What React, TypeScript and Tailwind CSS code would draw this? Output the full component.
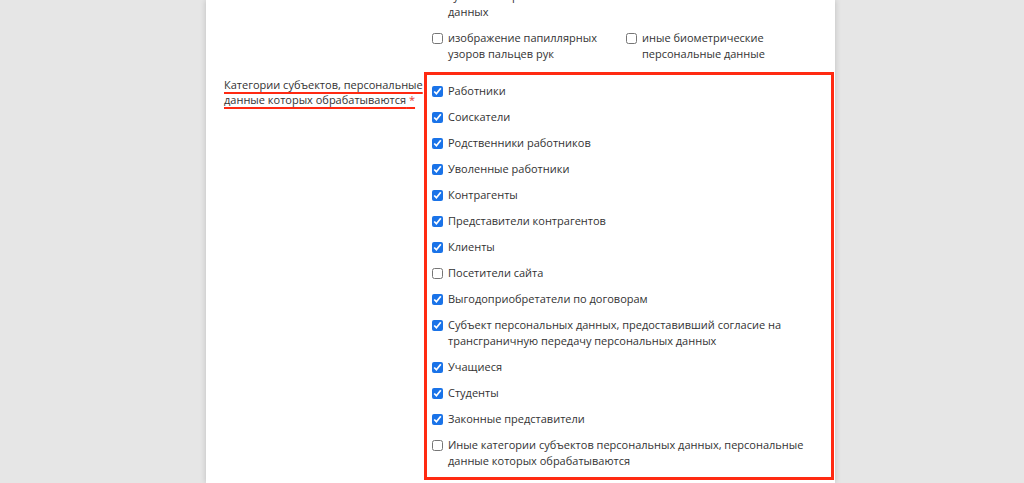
import { useState } from 'react';

type Option = {
    id: string;
    label: string;
    checked: boolean;
};

const biometric: Option[] = [
    { id: 'b1', label: 'сведения о характеристиках\nсубъекта персональных данных', checked: false },
    { id: 'b2', label: '', checked: false },
    { id: 'b3', label: 'изображение папиллярных узоров пальцев рук', checked: false },
    { id: 'b4', label: 'иные биометрические персональные данные', checked: false },
];

const subjects: Option[] = [
    { id: 's1', label: 'Работники', checked: true },
    { id: 's2', label: 'Соискатели', checked: true },
    { id: 's3', label: 'Родственники работников', checked: true },
    { id: 's4', label: 'Уволенные работники', checked: true },
    { id: 's5', label: 'Контрагенты', checked: true },
    { id: 's6', label: 'Представители контрагентов', checked: true },
    { id: 's7', label: 'Клиенты', checked: true },
    { id: 's8', label: 'Посетители сайта', checked: false },
    { id: 's9', label: 'Выгодоприобретатели по договорам', checked: true },
    {
        id: 's10',
        label: 'Субъект персональных данных, предоставивший согласие на трансграничную передачу персональных данных',
        checked: true,
    },
    { id: 's11', label: 'Учащиеся', checked: true },
    { id: 's12', label: 'Студенты', checked: true },
    { id: 's13', label: 'Законные представители', checked: true },
    {
        id: 's14',
        label: 'Иные категории субъектов персональных данных, персональные данные которых обрабатываются',
        checked: false,
    },
];

function CheckItem({ option, onToggle }: { option: Option; onToggle: () => void }) {
    if (!option.label) {
        return <div />;
    }

    return (
        <label className="flex items-start gap-[5px] text-[11px] leading-[16px] text-[#333]">
            <input
                type="checkbox"
                checked={option.checked}
                onChange={onToggle}
                className="m-0 mt-[3px] h-[11px] w-[11px] shrink-0 accent-[#1a73e8]"
            />
            <span className="whitespace-pre-line">{option.label}</span>
        </label>
    );
}

export default function App() {
    const [bio, setBio] = useState(biometric);
    const [items, setItems] = useState(subjects);

    function toggle(list: Option[], id: string) {
        return list.map((item) =>
            item.id === id ? { ...item, checked: !item.checked } : item
        );
    }

    return (
        <div
            className="h-[483px] overflow-hidden bg-[#e6e6e6]"
            style={{ fontFamily: '"Open Sans", "Noto Sans", sans-serif' }}
        >
            <div className="ml-[206px] flow-root h-full w-[629px] bg-white shadow-[0_0_6px_rgba(0,0,0,0.18)]">
                <div className="-mt-[28px] flex flex-col pl-[16px]">
                    {/* biometric group (cut at top) */}
                    <div className="flex">
                        <div className="w-[202px] shrink-0" />
                        <div className="grid grid-cols-[178px_178px] gap-x-[16px] gap-y-[10px] pl-[8px]">
                            {bio.map((option) => (
                                <CheckItem
                                    key={option.id}
                                    option={option}
                                    onToggle={() => setBio(toggle(bio, option.id))}
                                />
                            ))}
                        </div>
                    </div>

                    {/* subject categories */}
                    <div className="mt-[10px] flex">
                        <div className="w-[202px] shrink-0 whitespace-nowrap pt-[5px] pl-[2px] text-[11px] leading-[15px] text-[#333]">
                            <span className="underline decoration-[#ff2a12] decoration-2 underline-offset-[3px]">
                                Категории субъектов, персональные
                            </span>
                            <br />
                            <span className="underline decoration-[#ff2a12] decoration-2 underline-offset-[3px]">
                                данные которых обрабатываются{' '}
                                <span className="text-[#e53935]">*</span>
                            </span>
                        </div>
                        <div className="flex w-[410px] flex-col gap-[10px] border-[3px] border-[#ff2a12] pt-[8px] pr-[8px] pb-[8px] pl-[5px]">
                            {items.map((option) => (
                                <CheckItem
                                    key={option.id}
                                    option={option}
                                    onToggle={() => setItems(toggle(items, option.id))}
                                />
                            ))}
                        </div>
                    </div>

                    <div className="flex pt-[2px]">
                        <div className="w-[202px] shrink-0" />
                        <div className="pl-[24px] text-[11px] leading-[16px] text-[#333]">
                            Сведения о получателях
                        </div>
                    </div>
                </div>
            </div>
        </div>
    );
}
